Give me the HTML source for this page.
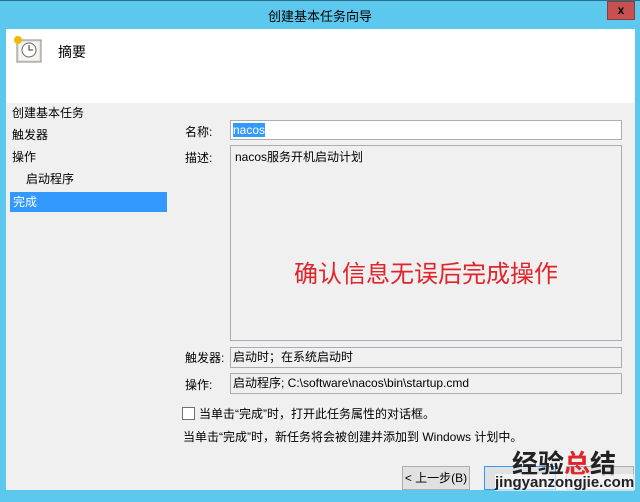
<!DOCTYPE html>
<html><head><meta charset="utf-8"><style>
*{margin:0;padding:0;box-sizing:border-box}
body{width:640px;height:502px;overflow:hidden;background:#5dc8ee;font-family:"Liberation Sans","Noto Sans CJK SC",sans-serif;font-size:12px;color:#000;position:relative}
.a{position:absolute;white-space:nowrap}
.box{position:absolute;background:#f0f0f0;border:1px solid #abadb3}
</style></head><body>
<div class="a" style="left:0;top:0;width:640px;height:1px;background:#2a6f8a"></div>
<div class="a" style="left:0;top:6px;width:640px;text-align:center;font-size:13px;color:#000">创建基本任务向导</div>
<div class="a" style="left:607px;top:1px;width:28px;height:19px;background:#c75050;border:1px solid #8c3a3a;color:#000;font-weight:bold;text-align:center;font-size:12px;line-height:17px">x</div>
<div class="a" style="left:6px;top:29px;width:629px;height:461px;background:#f0f0f0"></div>
<div class="a" style="left:6px;top:29px;width:629px;height:74px;background:#fff"></div>
<svg class="a" style="left:12px;top:34px" width="32" height="32"><rect x="5" y="6" width="24" height="22" fill="#e8e4dc" stroke="#888"/><rect x="7" y="8" width="20" height="18" fill="#f6f4ee"/><circle cx="17" cy="16" r="7" fill="#fff" stroke="#666"/><path d="M17 11v5h4" stroke="#333" fill="none"/><circle cx="6" cy="6" r="4" fill="#f5b800"/></svg>
<div class="a" style="left:58px;top:42px;font-size:14px">摘要</div>
<div class="a" style="left:12px;top:104px">创建基本任务</div>
<div class="a" style="left:12px;top:126px">触发器</div>
<div class="a" style="left:12px;top:148px">操作</div>
<div class="a" style="left:26px;top:170px">启动程序</div>
<div class="a" style="left:10px;top:192px;width:157px;height:20px;background:#3399ff;color:#fff;padding:1px 0 0 3px">完成</div>
<div class="a" style="left:185px;top:123px">名称:</div>
<div class="a" style="left:230px;top:120px;width:392px;height:20px;background:#fff;border:1px solid #abadb3"><span style="background:#3399ff;color:#fff;margin-left:2px;line-height:18px">nacos</span></div>
<div class="a" style="left:185px;top:149px">描述:</div>
<div class="box" style="left:230px;top:145px;width:392px;height:196px"></div>
<div class="a" style="left:235px;top:148px">nacos服务开机启动计划</div>
<div class="a" style="left:230px;top:254px;width:392px;text-align:center;color:#e0242a;font-size:24px">确认信息无误后完成操作</div>
<div class="a" style="left:185px;top:349px">触发器:</div>
<div class="box" style="left:230px;top:347px;width:392px;height:21px"></div>
<div class="a" style="left:233px;top:348px">启动时；在系统启动时</div>
<div class="a" style="left:185px;top:376px">操作:</div>
<div class="box" style="left:230px;top:373px;width:392px;height:21px"></div>
<div class="a" style="left:233px;top:374px">启动程序; C:\software\nacos\bin\startup.cmd</div>
<div class="a" style="left:182px;top:407px;width:13px;height:13px;background:#fff;border:1px solid #707070"></div>
<div class="a" style="left:199px;top:405px">当单击“完成”时，打开此任务属性的对话框。</div>
<div class="a" style="left:183px;top:428px">当单击“完成”时，新任务将会被创建并添加到 Windows 计划中。</div>
<div class="a" style="left:402px;top:466px;width:68px;height:24px;background:#e1e1e1;border:1px solid #adadad;text-align:center;line-height:22px">&lt; 上一步(B)</div>
<div class="a" style="left:484px;top:466px;width:72px;height:24px;background:#e1e1e1;border:1px solid #3399ff"></div>
<div class="a" style="left:566px;top:466px;width:68px;height:24px;background:#e1e1e1;border:1px solid #adadad"></div>
<div class="a" style="left:512px;top:444px;font-size:26px;font-weight:bold;color:#222">经验<span style="color:#e0242a">总</span>结</div>
<div class="a" style="left:495px;top:474px;font-size:15px;font-weight:bold;color:#222;background:rgba(255,255,255,.6)">jingyanzongjie.com</div>
</body></html>
